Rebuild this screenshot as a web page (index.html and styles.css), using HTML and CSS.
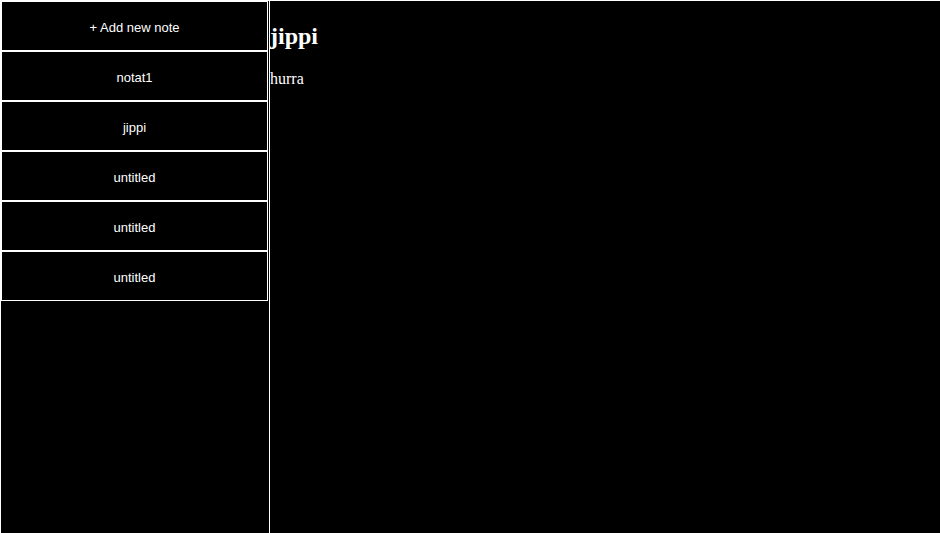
FILE: index.html
```html
<!DOCTYPE html>
<html lang="en">
<head>
<meta charset="utf-8">
<title>Notes</title>
<link rel="stylesheet" href="styles.css">
</head>
<body>
<div class="app">
  <nav class="sidebar">
    <button class="note-btn">+ Add new note</button>
    <button class="note-btn">notat1</button>
    <button class="note-btn">jippi</button>
    <button class="note-btn">untitled</button>
    <button class="note-btn">untitled</button>
    <button class="note-btn">untitled</button>
  </nav>
  <main class="editor">
    <h2 class="note-title">jippi</h2>
    <p class="note-body">hurra</p>
  </main>
</div>
</body>
</html>
```

FILE: styles.css
```css
html, body {
  margin: 0;
  padding: 0;
  background: #000;
  color: #fff;
  height: 100%;
  overflow: hidden;
}

.app {
  display: flex;
  box-sizing: border-box;
  height: 100vh;
  border-top: 1px solid #fff;
}

.sidebar {
  box-sizing: border-box;
  width: 269px;
  flex: none;
  display: flex;
  flex-direction: column;
  border-left: 1px solid #fff;
  padding-right: 1px;
}

.note-btn {
  box-sizing: border-box;
  height: 50px;
  width: 100%;
  margin: 0;
  padding: 2px 0 0;
  background: #000;
  color: #fff;
  border: 1px solid #fff;
  font-family: "Liberation Sans", Arial, sans-serif;
  font-size: 13px;
  text-align: center;
  cursor: pointer;
}

.editor {
  flex: 1;
  border-left: 1px solid #fff;
  padding-top: 2px;
  font-family: "Liberation Serif", "Times New Roman", serif;
}

.note-title {
  font-size: 24px;
  font-weight: bold;
  margin: 0.83em 0;
}

.note-body {
  font-size: 16px;
  margin: 1em 0;
}
```
